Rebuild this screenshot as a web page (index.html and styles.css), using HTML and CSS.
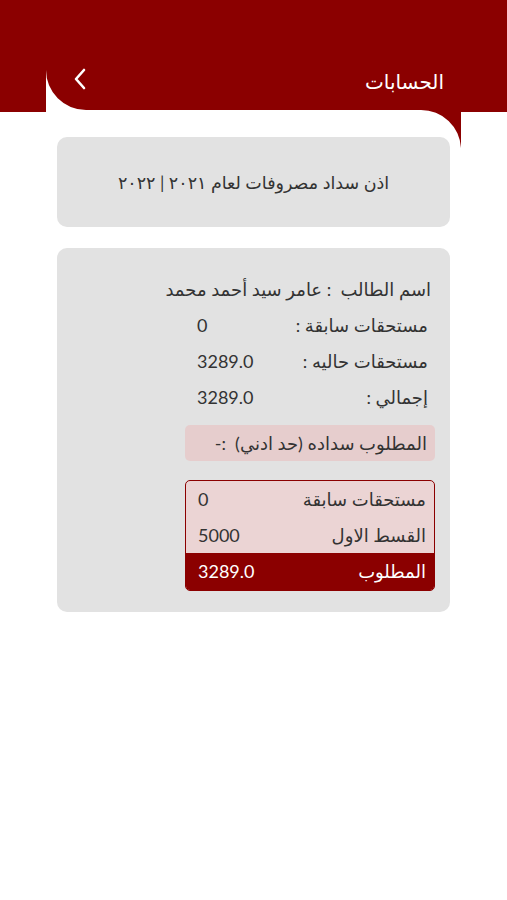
FILE: index.html
```html
<!DOCTYPE html>
<html lang="ar" dir="rtl">
<head>
    <meta charset="UTF-8">
    <meta name="viewport" content="width=device-width, initial-scale=1.0">
    <title>الحسابات</title>
    <link rel="stylesheet" href="styles.css">
</head>
<body>
    <header class="top-bar">
        <svg class="top-shape" width="507" height="150" viewBox="0 0 507 150" aria-hidden="true">
            <path d="M0 0 H507 V112 H461 V148 A40 40 0 0 0 421 110 H86 A40 40 0 0 1 46 70 V112 H0 Z" fill="#8b0000"/>
        </svg>
        <h1 class="page-title">الحسابات</h1>
        <button class="back-btn" aria-label="رجوع">
            <svg width="16" height="24" viewBox="0 0 16 24">
                <path d="M12 3 L4 12 L12 21" fill="none" stroke="#fff" stroke-width="2.6" stroke-linecap="round" stroke-linejoin="round"/>
            </svg>
        </button>
    </header>

    <main class="content">
        <section class="card title-card">
            <p>اذن سداد مصروفات لعام ٢٠٢١ | ٢٠٢٢</p>
        </section>

        <section class="card details-card">
            <p class="student-name">اسم الطالب&nbsp; : عامر سيد أحمد محمد</p>
            <div class="info-rows">
                <div class="info-row"><span class="label">مستحقات سابقة :</span><span class="value">0</span></div>
                <div class="info-row"><span class="label">مستحقات حاليه :</span><span class="value">3289.0</span></div>
                <div class="info-row"><span class="label">إجمالي :</span><span class="value">3289.0</span></div>
            </div>

            <div class="required-banner">المطلوب سداده (حد ادني)&nbsp; :-</div>

            <div class="pay-table">
                <div class="pay-row"><span>مستحقات سابقة</span><span class="value">0</span></div>
                <div class="pay-row"><span>القسط الاول</span><span class="value">5000</span></div>
                <div class="pay-row total"><span>المطلوب</span><span class="value">3289.0</span></div>
            </div>
        </section>
    </main>
</body>
</html>
```

FILE: styles.css
```css
body {
    font-family: "Lato", "DejaVu Sans", sans-serif;
    margin: 0;
    padding: 0;
    background-color: #fff;
    color: #333;
    width: 507px;
}
.top-bar {
    position: relative;
    height: 112px;
    display: flex;
    align-items: flex-end;
    justify-content: space-between;
    padding: 0 63px 18px 72px;
    box-sizing: border-box;
}
.top-shape {
    position: absolute;
    top: 0;
    left: 0;
    z-index: 0;
}
.page-title {
    position: relative;
    margin: 0;
    color: #fff;
    font-size: 20px;
    font-weight: normal;
    line-height: 26px;
}
.back-btn {
    position: relative;
    background: none;
    border: none;
    padding: 0;
    margin-bottom: 3px;
    display: flex;
}
.content {
    position: relative;
    padding: 25px 57px 0 57px;
}
.card {
    background-color: #e2e2e2;
    border-radius: 10px;
}
.title-card {
    height: 90px;
    display: flex;
    align-items: center;
    justify-content: center;
}
.title-card p {
    margin: 0;
    font-size: 17.5px;
    color: #333;
}
.details-card {
    margin-top: 21px;
    padding: 23px 15px 21px 15px;
}
.student-name {
    margin: 0;
    padding-right: 4px;
    font-size: 18px;
    line-height: 36px;
}
.info-rows {
    width: 250px;
}
.info-row {
    display: grid;
    grid-template-columns: auto 1fr;
    line-height: 36px;
    font-size: 18px;
    white-space: nowrap;
}
.info-row .label {
    padding-right: 7px;
}
.value {
    direction: ltr;
    text-align: left;
}
.info-row .value {
    padding-left: 12px;
}
.required-banner {
    width: 250px;
    box-sizing: border-box;
    margin-top: 10px;
    height: 36px;
    line-height: 36px;
    padding-right: 8px;
    background-color: #e6cdcd;
    border-radius: 5px;
    font-size: 18px;
}
.pay-table {
    width: 250px;
    box-sizing: border-box;
    margin-top: 19px;
    border: 1px solid #8b0000;
    border-radius: 5px;
    background-color: #ebd4d4;
    overflow: hidden;
}
.pay-row {
    display: flex;
    justify-content: space-between;
    height: 36px;
    line-height: 36px;
    padding: 0 8px 0 12px;
    font-size: 18px;
}
.pay-row.total {
    height: 37px;
    background-color: #8b0000;
    color: #fff;
}
```
